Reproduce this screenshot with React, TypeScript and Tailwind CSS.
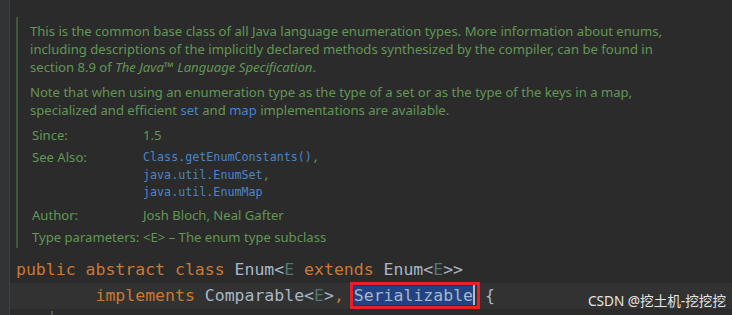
import React from "react";

const mono = { fontFamily: '"DejaVu Sans Mono", "Liberation Mono", monospace' };

export default function App() {
  const kw = "text-[#cc7832]";
  const id = "text-[#a9b7c6]";
  const tp = "text-[#507874]";
  return (
    <div className="relative w-[732px] h-[315px] bg-[#2b2b2b] flex overflow-hidden">
      <div className="w-[10px] h-full bg-[#313335] border-r border-[#3d3f41] shrink-0" />
      <div className="flex-1 flex flex-col">
        <div className="pt-[17px] pl-[6px]">
          <div
            className="border-l-2 border-[#3e5a39] pl-[12px] pt-[5px] pb-[4px] h-[231px] text-[#629755] text-[13.1px] leading-[18px]"
            style={{ fontFamily: '"Noto Sans", "Open Sans", sans-serif' }}
          >
            <p>
              This is the common base class of all Java language enumeration types. More information about enums,
              <br />
              including descriptions of the implicitly declared methods synthesized by the compiler, can be found in
              <br />
              section 8.9 of <i>The Java™ Language Specification</i>.
            </p>
            <p className="mt-[7px]">
              Note that when using an enumeration type as the type of a set or as the type of the keys in a map,
              <br />
              specialized and efficient <span className="text-[#3d85d8]">set</span> and{" "}
              <span className="text-[#3d85d8]">map</span> implementations are available.
            </p>
            <div className="mt-[8px] flex flex-col gap-[5px] leading-[17px]">
              <div className="flex">
                <span className="w-[113px] pl-[2px]">Since:</span>
                <span>1.5</span>
              </div>
              <div className="flex">
                <span className="w-[113px] pl-[2px]">See Also:</span>
                <div className="flex flex-col text-[11.7px] text-[#4a86c8]" style={mono}>
                  <span className="leading-[17.5px]">
                    Class.getEnumConstants()<span className="text-[#629755]">,</span>
                  </span>
                  <span className="leading-[17.5px]">
                    java.util.EnumSet<span className="text-[#629755]">,</span>
                  </span>
                  <span className="leading-[17.5px]">java.util.EnumMap</span>
                </div>
              </div>
              <div className="flex">
                <span className="w-[113px] pl-[2px]">Author:</span>
                <span>Josh Bloch, Neal Gafter</span>
              </div>
              <div className="flex">
                <span className="w-[111px] pl-[2px] whitespace-nowrap">Type parameters:</span>
                <span className="ml-[2px]">&lt;E&gt; – The enum type subclass</span>
              </div>
            </div>
          </div>
        </div>
        <div className="mt-[9px] text-[16.5px] leading-[26px] whitespace-pre" style={mono}>
          <div className="pl-[6px] h-[26px]">
            <span className={kw}>public abstract class </span>
            <span className={id}>Enum&lt;</span>
            <span className={tp}>E</span>
            <span className={kw}> extends </span>
            <span className={id}>Enum&lt;</span>
            <span className={tp}>E</span>
            <span className={id}>&gt;&gt;</span>
          </div>
          <div className="pl-[6px] h-[26px] bg-[#323232]">
            <span>{"        "}</span>
            <span className={kw}>implements </span>
            <span className={id}>Comparable&lt;</span>
            <span className={tp}>E</span>
            <span className={id}>&gt;</span>
            <span className={kw}>, </span>
            <span className="relative">
              <span className="bg-[#214283] text-[#a9b7c6]">Serializable</span>
              <span className="inline-block w-[2px] h-[20px] bg-[#bbbbbb] align-[-4px]" />
              <span className="absolute left-[-4px] right-[-5px] top-[-4px] bottom-[-4px] border-[3px] border-[#e8202a]" />
            </span>
            <span className={id}> {"{"}</span>
          </div>
          <div className="pl-[41px] h-[6px]">
            <div className="w-[2px] h-[6px] mt-[2px] bg-[#4b5f47]" />
          </div>
        </div>
      </div>
      <div
        className="absolute left-[588px] top-[292px] text-[13.6px] leading-[18px] text-[#e6e6e6] whitespace-nowrap"
        style={{ fontFamily: '"Noto Sans", "Noto Sans CJK SC", sans-serif' }}
      >
        CSDN @挖土机-挖挖挖
      </div>
    </div>
  );
}
